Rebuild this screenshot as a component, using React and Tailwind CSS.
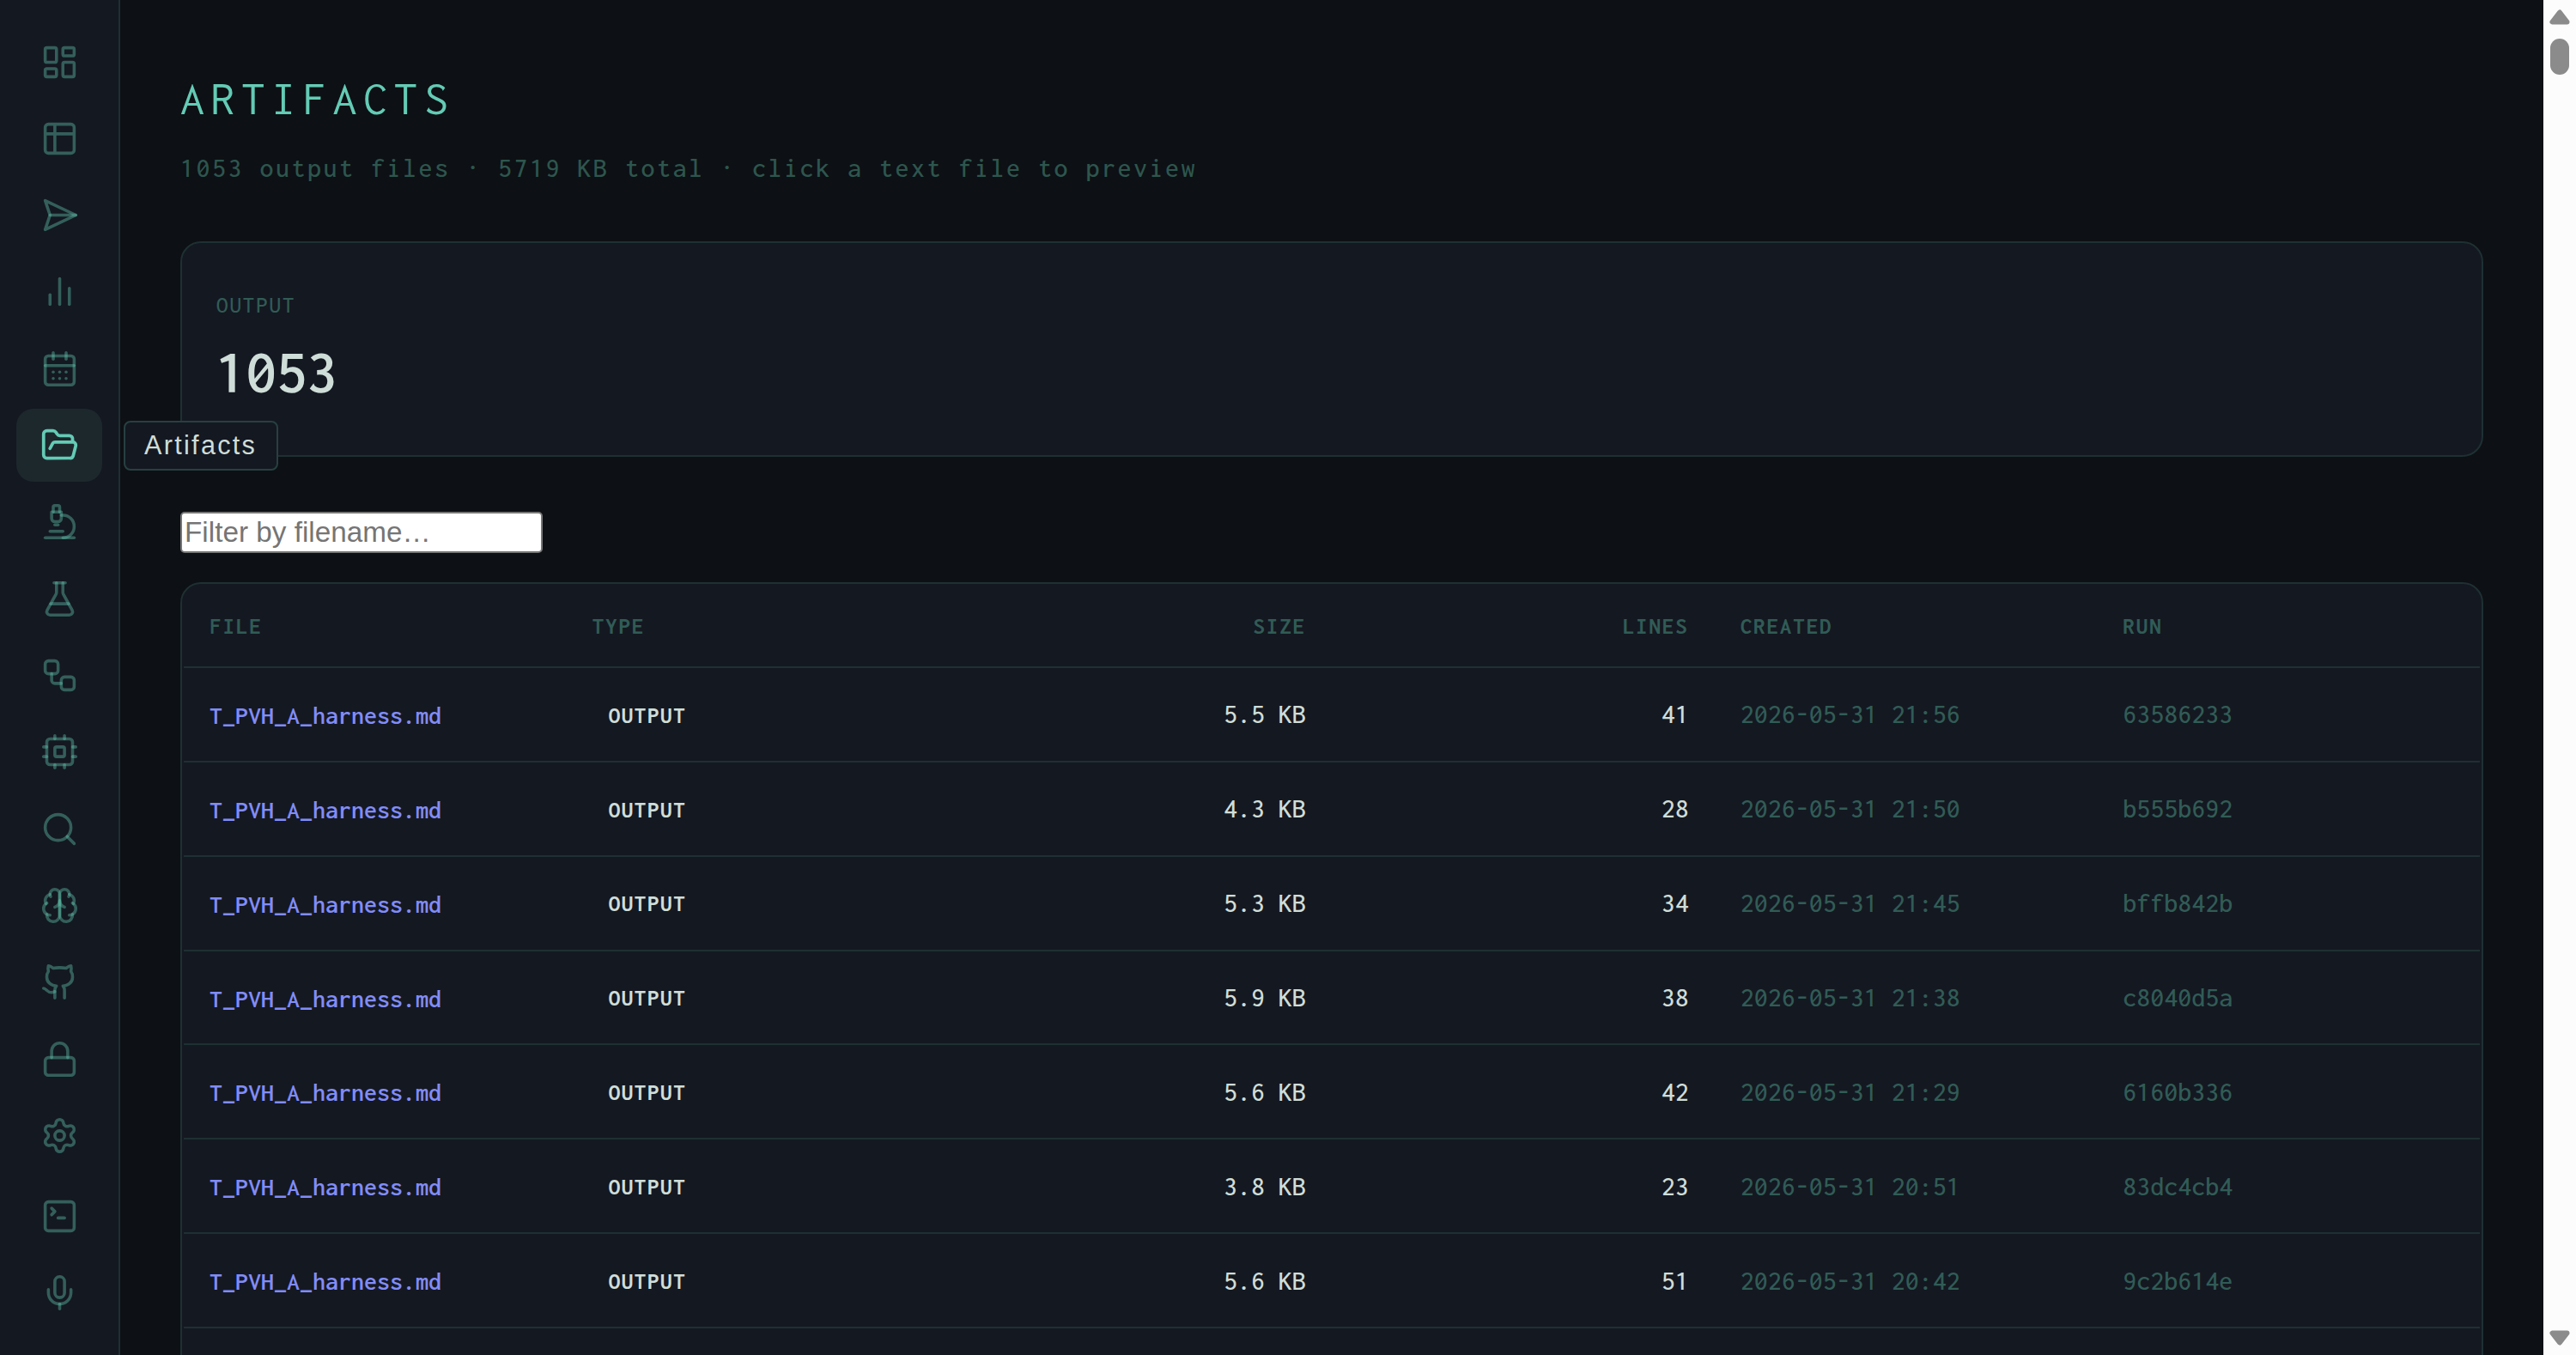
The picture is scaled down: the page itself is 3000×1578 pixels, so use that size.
import { FlaskConical, FolderOpen, Github, LayoutDashboard, Lock, Mic, Microscope, Search, Settings, SquareTerminal, Workflow } from 'lucide-react';

// Glyphs that the icon package draws differently
const makeIcon = paths => function Icon(props) {
  return (
    <svg viewBox="0 0 24 24" fill="none" stroke="currentColor" strokeLinecap="round" strokeLinejoin="round" {...props}>
      {paths.map(d => <path key={d} d={d} />)}
    </svg>
  );
};

const TableIcon = makeIcon(['M5 3h14a2 2 0 0 1 2 2v14a2 2 0 0 1-2 2H5a2 2 0 0 1-2-2V5a2 2 0 0 1 2-2zM3 9h18M9 3v18']);
const SendIcon = makeIcon(['m3 3 3 9-3 9 19-9Z', 'M6 12h16']);
const BarsIcon = makeIcon(['M18 20V10', 'M12 20V4', 'M6 20v-6']);
const CalendarIcon = makeIcon([
  'M5 4h14a2 2 0 0 1 2 2v14a2 2 0 0 1-2 2H5a2 2 0 0 1-2-2V6a2 2 0 0 1 2-2z',
  'M16 2v4', 'M8 2v4', 'M3 10h18', 'M8 14h.01', 'M12 14h.01', 'M16 14h.01', 'M8 18h.01', 'M12 18h.01', 'M16 18h.01',
]);
const CpuIcon = makeIcon([
  'M6 4h12a2 2 0 0 1 2 2v12a2 2 0 0 1-2 2H6a2 2 0 0 1-2-2V6a2 2 0 0 1 2-2z',
  'M10 9h4a1 1 0 0 1 1 1v4a1 1 0 0 1-1 1h-4a1 1 0 0 1-1-1v-4a1 1 0 0 1 1-1z',
  'M15 2v2', 'M15 20v2', 'M2 15h2', 'M2 9h2', 'M20 15h2', 'M20 9h2', 'M9 2v2', 'M9 20v2',
]);
const BrainIcon = makeIcon([
  'M12 5a3 3 0 1 0-5.997.125 4 4 0 0 0-2.526 5.77 4 4 0 0 0 .556 6.588A4 4 0 1 0 12 18Z',
  'M12 5a3 3 0 1 1 5.997.125 4 4 0 0 1 2.526 5.77 4 4 0 0 1-.556 6.588A4 4 0 1 1 12 18Z',
  'M15 13a4.5 4.5 0 0 1-3-4 4.5 4.5 0 0 1-3 4',
  'M17.599 6.5a3 3 0 0 0 .399-1.375',
  'M6.003 5.125A3 3 0 0 0 6.401 6.5',
  'M3.477 10.896a4 4 0 0 1 .585-.396',
  'M19.938 10.5a4 4 0 0 1 .585.396',
  'M6 18a4 4 0 0 1-1.967-.516',
  'M19.967 17.484A4 4 0 0 1 18 18',
]);

const nav = [
  { label: 'Dashboard', icon: LayoutDashboard },
  { label: 'Table', icon: TableIcon },
  { label: 'Send', icon: SendIcon },
  { label: 'Stats', icon: BarsIcon },
  { label: 'Schedule', icon: CalendarIcon },
  { label: 'Artifacts', icon: FolderOpen, active: true },
  { label: 'Research', icon: Microscope },
  { label: 'Experiments', icon: FlaskConical },
  { label: 'Workflows', icon: Workflow },
  { label: 'Hardware', icon: CpuIcon },
  { label: 'Search', icon: Search },
  { label: 'Memory', icon: BrainIcon },
  { label: 'GitHub', icon: Github },
  { label: 'Vault', icon: Lock },
  { label: 'Settings', icon: Settings },
];

const tools = [
  { label: 'Terminal', icon: SquareTerminal },
  { label: 'Voice', icon: Mic },
];

const files = [
  { size: '5.5 KB', lines: 41, created: '2026-05-31 21:56', run: '63586233' },
  { size: '4.3 KB', lines: 28, created: '2026-05-31 21:50', run: 'b555b692' },
  { size: '5.3 KB', lines: 34, created: '2026-05-31 21:45', run: 'bffb842b' },
  { size: '5.9 KB', lines: 38, created: '2026-05-31 21:38', run: 'c8040d5a' },
  { size: '5.6 KB', lines: 42, created: '2026-05-31 21:29', run: '6160b336' },
  { size: '3.8 KB', lines: 23, created: '2026-05-31 20:51', run: '83dc4cb4' },
  { size: '5.6 KB', lines: 51, created: '2026-05-31 20:42', run: '9c2b614e' },
];

function NavItem({ label, icon: Icon, active }) {
  return (
    <button aria-label={label} className={active ? 'relative flex h-[85px] w-[100px] flex-shrink-0 items-center justify-center rounded-[20px] bg-[#1d282d] text-[#64cbb5]' : 'flex h-[85px] w-[100px] flex-shrink-0 items-center justify-center rounded-[20px] text-[#64cbb5]/40'}>
      <Icon width={45} height={45} strokeWidth={active ? 2 : 1.9} />
      {active && (
        <span className="absolute left-[125px] top-[14px] z-10 flex h-[58px] w-[180px] items-center rounded-lg border-2 border-[#274042] bg-[#141821] pl-[22px] text-left font-['Liberation_Sans',sans-serif] text-[30.6px] tracking-[2.3px] text-[#cfddd8]">{label}</span>
      )}
    </button>
  );
}

function Sidebar() {
  return (
    <aside className="flex w-[140px] flex-shrink-0 flex-col items-center gap-[4.32px] border-r-2 border-[#1e3033] bg-[#141821] pt-[29.5px]">
      {nav.map(item => <NavItem key={item.label} {...item} />)}
      <div className="mt-[4.6px] flex flex-col gap-[4.32px]">
        {tools.map(item => <NavItem key={item.label} {...item} />)}
      </div>
    </aside>
  );
}

function FileTable() {
  return (
    <section className="mt-[34px] h-[920px] rounded-t-3xl border-2 border-[#1e3033] bg-[#141821] px-[2px]">
      <div className="grid h-[98px] grid-cols-6 items-center border-b-2 border-[#1e3033] pt-[2px] text-[27px] font-[680] tracking-[1.9px] text-[#315c56] *:px-[30px]">
        <span>FILE</span>
        <span>TYPE</span>
        <span className="text-right">SIZE</span>
        <span className="text-right">LINES</span>
        <span>CREATED</span>
        <span>RUN</span>
      </div>
      {files.map(f => (
        <div key={f.run} className="grid h-[109.86px] grid-cols-6 items-center border-b-2 border-[#1e3033] text-[32px] font-[450] text-[#cfddd8] *:px-[30px]">
          <a className="pt-[3px] text-[30px] font-[580] text-[#818cf8]">T_PVH_A_harness.md</a>
          <span className="pt-[2px]"><span className="block pl-[19px] text-[27px] font-bold tracking-[1.6px]">OUTPUT</span></span>
          <span className="pt-px text-right">{f.size}</span>
          <span className="pt-px text-right">{f.lines}</span>
          <span className="pt-px text-[#315c56]">{f.created}</span>
          <span className="pt-px text-[#315c56]">{f.run}</span>
        </div>
      ))}
    </section>
  );
}

function Scrollbar() {
  return (
    <div className="flex w-[38px] flex-shrink-0 flex-col items-center bg-[#fcfcfc] pt-[11px] pb-[11px]">
      <svg width="24" height="18" viewBox="0 0 24 18" fill="#8b8b8b" stroke="#8b8b8b" strokeWidth="6" strokeLinejoin="round"><path d="M12 3.5 3.5 14.5h17z" /></svg>
      <div className="mt-4 h-[42px] w-[22px] rounded-full bg-[#8b8b8b]" />
      <svg className="mt-auto" width="24" height="18" viewBox="0 0 24 18" fill="#8b8b8b" stroke="#8b8b8b" strokeWidth="6" strokeLinejoin="round"><path d="M12 14.5 3.5 3.5h17z" /></svg>
    </div>
  );
}

export default function App() {
  return (
    <div className="flex h-[1578px] w-[3000px] overflow-hidden bg-[#0d1014] font-['Inconsolata',monospace]">
      <Sidebar />
      <main className="min-w-0 flex-1 px-[70px] pt-[85px]">
        <h1 className="text-[56px] leading-[60px] font-[370] tracking-[7.5px] text-[#64cbb5]">ARTIFACTS</h1>
        <p className="mt-[31px] text-[32px] leading-[40px] font-[470] tracking-[2.5px] text-[#2d564e]">1053 output files · 5719 KB total · click a text file to preview</p>
        <section className="mt-[65px] h-[251px] rounded-3xl border-2 border-[#1e3033] bg-[#141821] px-[40px] pt-[56px]">
          <div className="text-[27px] leading-[32px] font-[470] tracking-[1.9px] text-[#315c56]">OUTPUT</div>
          <div className="-ml-px mt-[22px] text-[72px] leading-[80px] font-[630] tracking-[-0.7px] text-[#cfddd8]">1053</div>
        </section>
        <input placeholder="Filter by filename…" className="mt-[64px] block h-[48px] w-[422px] rounded-[5px] border-2 border-[#767676] bg-white px-[3px] font-['Liberation_Sans',sans-serif] text-[33.3px] leading-[38px] placeholder:text-[#757575]" />
        <FileTable />
      </main>
      <Scrollbar />
    </div>
  );
}
